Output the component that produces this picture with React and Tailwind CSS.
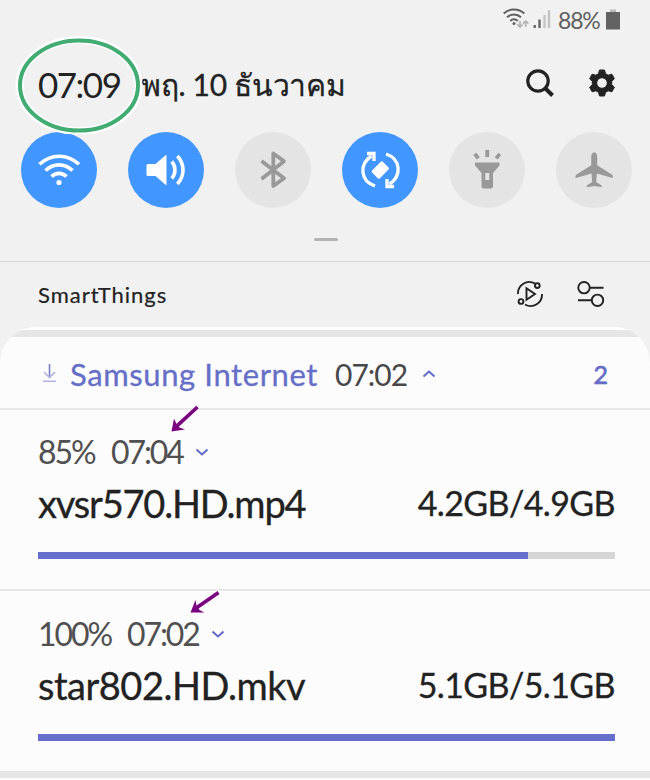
const toggles = [
  { name: "wifi", on: true, icon: <WifiIcon /> },
  { name: "sound", on: true, icon: <SoundIcon /> },
  { name: "bluetooth", on: false, icon: <BluetoothIcon /> },
  { name: "rotate", on: true, icon: <RotateIcon /> },
  { name: "flashlight", on: false, icon: <FlashlightIcon /> },
  { name: "airplane", on: false, icon: <AirplaneIcon /> },
];

function WifiIcon() {
  return (
    <svg width="76" height="76" viewBox="0 0 76 76" fill="none" stroke="currentColor" strokeWidth="3.6">
      <path d="M18.5 32.2C30 21.5 46.5 21.5 58 32.2" />
      <path d="M24.5 38.5C32.5 31 43.5 31 51.5 38.5" />
      <path d="M30.5 44.5C35 40.3 41 40.3 45.5 44.5" />
      <circle cx="38" cy="50.5" r="2.6" fill="currentColor" stroke="none" />
    </svg>
  );
}

function SoundIcon() {
  return (
    <svg width="76" height="76" viewBox="0 0 76 76" fill="none" stroke="currentColor" strokeWidth="3.6">
      <path
        d="M18.5 33.5q0-1.5 1.5-1.5h7.5L37.5 23.2q1-.7 1 .6v28.4q0 1.300-1 .6L27.500 44H20q-1.500 0-1.500-1.500z"
        fill="currentColor"
        stroke="none"
      />
      <path d="M43.8 29.500c4.200 5 4.200 12 0 17" />
      <path d="M49.3 24c7.600 8 7.600 20 0 28" />
    </svg>
  );
}

function BluetoothIcon() {
  return (
    <svg width="76" height="76" viewBox="0 0 76 76" fill="none" stroke="currentColor" strokeWidth="3.8" strokeLinejoin="round">
      <path d="M26.5 29 49 46.3 38.3 54V21.5L49 29.2 26.5 47" />
    </svg>
  );
}

function RotateIcon() {
  return (
    <svg width="76" height="76" viewBox="0 0 76 76" fill="none" stroke="currentColor" strokeWidth="3.3">
      <path d="M33 54C18 49 17 32 29.5 24" />
      <path d="M44 22C59 27 60 44 47.500 52" />
      <path d="M25 21.500h7v7.500M52 54.500h-7V47" />
      <rect x="30.700" y="32.500" width="15.200" height="11" rx="1.500" fill="currentColor" stroke="none" transform="rotate(-45 38.300 38)" />
    </svg>
  );
}

function FlashlightIcon() {
  return (
    <svg width="76" height="76" viewBox="0 0 76 76" fill="currentColor">
      <path
        fillRule="evenodd"
        d="M26 30.5h24.5v3L44 41v13q0 2.500-2.500 2.500H35q-2.500 0-2.500-2.500V41L26 33.500zM36.300 41v7h4v-7z"
      />
      <path d="M38.2 18v7M25.8 21.800l3.500 4.500M50.700 21.800l-3.500 4.500" stroke="currentColor" strokeWidth="3.8" />
    </svg>
  );
}

function AirplaneIcon() {
  return (
    <svg width="76" height="76" viewBox="0 0 76 76" fill="currentColor">
      <path d="M38.2 20.3c-2 0-3 2.200-3 4.500v8.500L21 42.300c-1.200.8-1.600 1.300-1.600 2.700 0 .9.500 1 1.400.7l14.700-4.200.7 8.500-4.700 3c-.7.500-.9 1-.9 2.200l7.600-1.200 7.600 1.200c0-1.200-.2-1.700-.9-2.200L40.200 50l.7-8.500 14.700 4.200c.9.300 1.400.2 1.400-.7 0-1.400-.4-1.900-1.600-2.700L41.200 33.300v-8.500c0-2.300-1-4.500-3-4.500z" />
    </svg>
  );
}

function StatusIcons() {
  return (
    <svg className="mt-[7px]" width="50" height="24" viewBox="0 0 50 24" fill="none" stroke="#606060" strokeWidth="2">
      <path d="M.7 6.5C6.5 1.2 15.5 1.2 21.3 6.5" />
      <path d="M4 10.3C8 6.5 14 6.5 18 10.3" />
      <path d="M7.3 14C9.5 11.7 12.5 11.7 14.7 14" />
      <circle cx="11" cy="16.6" r="1.5" fill="#606060" stroke="none" />
      <g stroke="#b5b5b5" strokeWidth="1.7">
        <path d="M17 14v6M14.3 17.400l2.700 2.700 2.700-2.700M22.700 20v-6M20 16.600l2.700-2.700 2.700 2.700" />
      </g>
      <path d="M31.700 18v3" strokeWidth="2.3" />
      <path d="M36.500 12.500V21" strokeWidth="2.3" />
      <path d="M41.500 8v13M46 3.300V21" stroke="#c2c2c2" strokeWidth="2.3" />
    </svg>
  );
}

function Chevron({ up, className }) {
  return (
    <svg className={className} width="14" height="10" viewBox="0 0 14 10" fill="none" stroke="#5f68c6" strokeWidth="1.9">
      <path d={up ? "M1.5 7.5 7 2.5l5.5 5" : "M1.5 2.5 7 7.5l5.5-5"} />
    </svg>
  );
}

function Arrow({ className, steep }) {
  return (
    <svg className={className} width="32" height="30" viewBox="0 0 32 30" fill="#7b0080">
      {steep ? (
        <>
          <path d="M27.5 2 7 20.8" stroke="#7b0080" strokeWidth="3.6" />
          <path d="M1.5 26.5 4 13.5 6.5 19 9.5 22.5 15 24.5z" />
        </>
      ) : (
        <>
          <path d="M28.5 1.500 7 16.500" stroke="#7b0080" strokeWidth="3.6" />
          <path d="M.5 21.500 5.500 9 6.500 14.500 9.500 19 14.500 21.500z" />
        </>
      )}
    </svg>
  );
}

function Download({ percent, percentClass, time, timeClass, name, nameClass, size, sizeClass, value, arrow, className }) {
  return (
    <section className={`${className} pl-[38px] pr-[35px]`}>
      <div className="relative flex h-[30px] items-center text-[32px] text-[#505050]">
        <span className={percentClass}>{percent}</span>
        <span className={timeClass}>{time}</span>
        <Chevron className="ml-[11px] shrink-0" />
        {arrow}
      </div>
      <div className="mt-[19px] flex h-[34px] items-center justify-between text-[#222] [-webkit-text-stroke:0.3px]">
        <span className={`${nameClass} text-[38px]`}>{name}</span>
        <span className={`${sizeClass} text-right text-[34px]`}>{size}</span>
      </div>
      <div className="mt-[32px] h-[7px] bg-[#d6d6d6]">
        <div className="h-full bg-[#656dcd]" style={{ width: `${value}%` }} />
      </div>
    </section>
  );
}

export default function App() {
  return (
    <main className="flex h-[780px] w-[650px] flex-col overflow-hidden whitespace-nowrap bg-[#f1f1f1] font-['Lato','Noto_Sans',sans-serif] leading-none text-[#222]">
      <header className="flex h-[42px] justify-end pr-[30px]">
        <StatusIcons />
        <span className="ml-[5px] mt-[9px] w-[44px] text-[23px] tracking-[-1.2px] text-[#606060]">88%</span>
        <svg className="ml-[4px] mt-[9px]" width="14" height="21" viewBox="0 0 14 21" fill="#636363">
          <path d="M4 .5h6V3H4z" fill="#bbb" />
          <path d="M0 3h14v17q0 .5-.5.5H.5Q0 20.500 0 20z" />
        </svg>
      </header>

      <div className="relative flex h-[90px] items-center pl-[38px] pr-[34px]">
        <time className="-mt-[5px] w-[103px] text-[35px] tracking-[-1.5px]">07:09</time>
        <span className="-mt-[6px] w-[206px] text-[30px] tracking-[-0.3px] [-webkit-text-stroke:0.3px]">พฤ. 10 ธันวาคม</span>
        <svg className="-mt-[9px] ml-auto" width="30" height="30" viewBox="0 0 30 30" fill="none" stroke="#222" strokeWidth="3.2">
          <circle cx="13" cy="13" r="10.2" />
          <path d="m20 20 7.500 7.500" strokeWidth="4" />
        </svg>
        <svg className="-mt-[9px] ml-[33px]" width="28" height="28" viewBox="0 0 28 28" fill="#222" stroke="#222" strokeLinejoin="round">
          <path
            fillRule="evenodd"
            d="M11.500 1h5l1 3.700 2.700 1.500 3.700-1 2.500 4.500-2.700 2.700v3.200l2.700 2.700-2.500 4.500-3.700-1-2.700 1.500-1 3.700h-5l-1-3.700-2.700-1.500-3.700 1-2.500-4.500 2.700-2.700v-3.200L1.600 9.700l2.500-4.500 3.700 1 2.700-1.500zM14 8.700a5.300 5.300 0 1 0 0 10.600 5.300 5.300 0 0 0 0-10.600z"
          />
        </svg>
        {/* marker ring around the clock */}
        <svg className="absolute -top-[6px] left-[15px] z-10" width="128" height="98" viewBox="0 0 128 98" fill="none">
          <ellipse cx="64" cy="49.5" rx="59.500" ry="45.500" stroke="#fff" strokeWidth="8" />
          <ellipse cx="64" cy="49.5" rx="59" ry="45" stroke="#42ac72" strokeWidth="4" />
        </svg>
      </div>

      <div className="flex h-[76px] justify-between pl-[21px] pr-[18px]">
        {toggles.map(({ name, on, icon }) => (
          <button
            key={name}
            aria-label={name}
            className={`size-[76px] rounded-full ${on ? "bg-[#4296ff] text-white" : "bg-[#e4e4e4] text-[#999]"}`}
          >
            {icon}
          </button>
        ))}
      </div>

      <div className="flex h-[54px] justify-center border-b border-[#d8d8d8] pt-[30px]">
        <div className="ml-[2px] h-[3px] w-6 rounded-full bg-[#b3b3b3]" />
      </div>

      <div className="flex h-[65px] items-center pl-[38px] pr-[44px]">
        <span className="w-[200px] text-[22px] tracking-[1px] [-webkit-text-stroke:0.2px]">SmartThings</span>
        <svg className="-mt-[1px] ml-auto" width="28" height="28" viewBox="0 0 28 28" fill="none" stroke="#222" strokeWidth="1.9">
          <path d="M2 14C1.500 5 11-1 19 3.500" />
          <path d="M26 14C26.500 23 17 29 9 24.500" />
          <circle cx="21.300" cy="5.600" r="2.400" />
          <circle cx="5" cy="21.500" r="2.400" />
          <path d="M10.500 8.200v11.600l8.500-5.800z" />
        </svg>
        <svg className="-mt-[1px] ml-[32px]" width="30" height="28" viewBox="0 0 30 28" fill="none" stroke="#222" strokeWidth="1.9">
          <circle cx="8" cy="7.700" r="5.700" />
          <path d="M14 7.700h13.500M2 20.300h14" />
          <circle cx="21.500" cy="20.300" r="5.700" />
        </svg>
      </div>

      <div className="flex grow flex-col overflow-hidden rounded-t-[36px] bg-[#fcfcfc]">
        <div className="h-[3px] shrink-0 bg-white" />
        <div className="h-[7px] shrink-0 bg-[#e6e6e6]" />
        <div className="flex h-[73px] shrink-0 items-center border-b-2 border-[#e8e8e8] pl-[42px] pr-[42px] pt-[3px]">
          <svg className="-mt-[3px]" width="15" height="20" viewBox="0 0 15 20" fill="none" stroke="#aeb3df" strokeWidth="1.6">
            <path d="M7.500 1v13" stroke="#7980c9" />
            <path d="m2 9 5.500 5.500L13 9M1 18.200h13" />
          </svg>
          <span className="ml-[13px] w-[265px] text-[31px] tracking-[0.6px] text-[#666fc7] [-webkit-text-stroke:0.3px]">
            Samsung Internet
          </span>
          <span className="w-[76px] text-[30px] tracking-[-1px] text-[#484848]">07:02</span>
          <Chevron up className="ml-[11px]" />
          <span className="ml-auto text-[25px] text-[#666fc7] [-webkit-text-stroke:0.7px]">2</span>
        </div>
        <Download
          className="h-[181px] shrink-0 border-b-2 border-[#e8e8e8] pt-[27px]"
          percent="85%"
          percentClass="w-[73px] tracking-[-2px]"
          time="07:04"
          timeClass="w-[73px] tracking-[-2.1px]"
          name="xvsr570.HD.mp4"
          nameClass="tracking-[-1.2px]"
          size="4.2GB/4.9GB"
          sizeClass="tracking-[-0.6px]"
          value={85}
          arrow={<Arrow steep className="absolute -top-[32px] left-[132px]" />}
        />
        <Download
          className="h-[180px] shrink-0 pt-[28px]"
          percent="100%"
          percentClass="w-[89px] tracking-[-2.1px]"
          time="07:02"
          timeClass="w-[73px] tracking-[-2.1px]"
          name="star802.HD.mkv"
          nameClass="tracking-[-0.5px]"
          size="5.1GB/5.1GB"
          sizeClass="tracking-[-0.6px]"
          value={100}
          arrow={<Arrow className="absolute -top-[28px] left-[152px]" />}
        />
        <div className="h-[7px] shrink-0 bg-[#e6e6e6]" />
      </div>
    </main>
  );
}
